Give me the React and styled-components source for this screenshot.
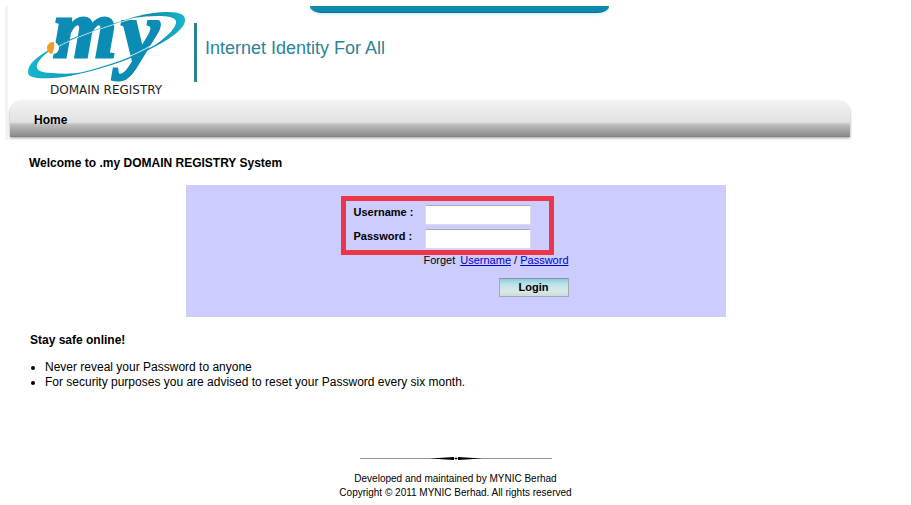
import styled, { createGlobalStyle } from "styled-components"

const GlobalStyle = createGlobalStyle`
    * {
        box-sizing: border-box;
    }

    body {
        margin: 0;
        background-color: #ffffff;
        color: #000000;
        font-family: "Liberation Sans", Arial, sans-serif;
        font-size: 12px;
    }
`

const Page = styled.div`
    border-right: 1px solid #cccccc;
    min-height: 100vh;
    padding-top: 6px;
`

const Header = styled.header`
    border-left: 3px solid #f3f3f3;
    margin-left: 5px;
    padding-bottom: 3px;
`

const TopTab = styled.div`
    background-color: #0e88ab;
    border-bottom: 1px solid #0b6f90;
    border-radius: 0 0 12px 12px / 0 0 7px 7px;
    box-shadow: 0 2px 3px #d5f0f8;
    height: 7px;
    margin: 0 auto;
    max-width: 299px;
`

const Brand = styled.div`
    display: flex;
    padding-left: 16px;
`

const Logo = styled.svg`
    display: block;
    height: 88px;
    overflow: visible;
    width: 170px;
`

const Tagline = styled.p`
    align-items: center;
    align-self: flex-start;
    border-left: 3px solid #2b8396;
    color: #2b8396;
    display: flex;
    font-size: 18px;
    height: 59px;
    line-height: 20px;
    margin: 10px 0 0;
    padding: 0 0 10px 8px;
`

const Nav = styled.nav`
    background: linear-gradient(#f2f2f2, #e2e2e2 58%, #bcbcbc 66%, #8c8c8c 97%, #7c7c7c);
    border-radius: 12px 12px 0 0;
    box-shadow: 0 1px 3px #999999;
    margin: 0 61px 0 2px;
    padding: 12px 24px 9px;
`

const NavLink = styled.a`
    color: #000000;
    display: inline-block;
    font-weight: bold;
    line-height: 15px;
    text-decoration: none;
`

const Main = styled.main`
    padding-top: 16px;
`

const Title = styled.h1`
    font-size: 12px;
    line-height: 15px;
    margin: 0 0 14px 29px;
`

const LoginPanel = styled.section`
    background-color: #ccccff;
    margin: 0 auto 16px;
    max-width: 540px;
    padding: 11px 2px 20px 0;
`

const LoginForm = styled.form`
    display: flex;
    flex-direction: column;
    font-size: 11px;
    margin: 0 auto;
    width: 228px;
`

const Fields = styled.fieldset`
    align-self: flex-start;
    border: 5px solid #ea3648;
    display: grid;
    gap: 4px 8px;
    grid-template-columns: 63px 106px;
    margin: 0;
    padding: 4px 18px 1px 8px;
`

const Label = styled.label`
    font-weight: bold;
    line-height: 14px;
    white-space: nowrap;
`

const Input = styled.input`
    background-color: #ffffff;
    border: 1px solid #dcdce8;
    border-top-color: #a9a9b8;
    border-radius: 2px;
    font-family: inherit;
    font-size: 11px;
    height: 20px;
    padding: 0 3px;
    width: 100%;
`

const Forget = styled.p`
    align-self: flex-end;
    line-height: 11px;
    margin: 0 0 12px;
    white-space: nowrap;

    a {
        color: #0000cc;
    }

    a:first-of-type {
        margin-left: 2px;
    }
`

const LoginButton = styled.button`
    align-self: flex-end;
    background: linear-gradient(#8fcbd8, #b9e3ea 30%, #d9e9e6 70%, #c9dde0);
    border: 1px solid #a6a6b4;
    border-top-color: #7d9aa6;
    color: #000000;
    cursor: pointer;
    font-family: inherit;
    font-size: 11px;
    font-weight: bold;
    height: 19px;
    line-height: 15px;
    padding: 0;
    width: 70px;
`

const Subtitle = styled.h2`
    font-size: 12px;
    line-height: 15px;
    margin: 0 0 12px 30px;
`

const Tips = styled.ul`
    line-height: 15px;
    margin: 0;
    padding-left: 45px;
`

const Footer = styled.footer`
    font-size: 10px;
    line-height: 14px;
    padding-top: 64px;
    text-align: center;

    p {
        margin: 0;
    }
`

const Ornament = styled.svg`
    display: block;
    height: 9px;
    margin: 0 auto 9px;
    width: 192px;
`

function RegistryLogo() {
    return (
        <Logo viewBox="24 13 170 88" role="img" aria-label=".my Domain Registry">
            <defs>
                <linearGradient id="ring" x1="0" x2="1">
                    <stop offset="0" stopColor="#16b6cc" />
                    <stop offset="0.4" stopColor="#138fb2" />
                    <stop offset="0.8" stopColor="#138fb2" />
                    <stop offset="1" stopColor="#16b6cc" />
                </linearGradient>
            </defs>
            <g
                fill="#0b8cb4"
                stroke="#0b8cb4"
                strokeWidth="3"
                fontFamily="Liberation Serif, serif"
                fontStyle="italic"
                fontWeight="bold"
            >
                <text x="53" y="57" fontSize="82">
                    m
                </text>
                <text x="121" y="61" fontSize="86">
                    y
                </text>
            </g>
            <path d="M54 49C76 36 105 27 134 18" fill="none" stroke="#e4f6fa" strokeWidth="1" />
            <path d="M83 71C110 65 132 57 154 44" fill="none" stroke="#e4f6fa" strokeWidth="1" />
            <path
                fill="url(#ring)"
                fillRule="evenodd"
                d="M28 72C28 63 39 56 50 49C76 35 106 26 134 17C148 13 160 12 168 12C180 12 186 15 185 21C184 29 170 39 156 46C132 59 108 67 83 73C64 78 46 79 37 78C30 77 28 75 28 72ZM37 65C35 70 42 73 52 73C62 74 74 74 83 72C107 66 131 58 155 45C168 36 177 27 176 21C173 14 150 16 133 18C106 26 76 36 51 50C43 55 39 60 37 65Z"
            />
            <circle cx="53" cy="48" r="6" fill="#ffffff" />
            <path d="M54 42A6 6 0 0 0 52 54Q55 48 54 42Z" fill="#f39a2b" />
            <text x="50" y="94" fill="#222222" fontFamily="DejaVu Sans, sans-serif" fontSize="12">
                DOMAIN REGISTRY
            </text>
        </Logo>
    )
}

function Divider() {
    return (
        <Ornament viewBox="0 0 192 9" aria-hidden="true">
            <path d="M0 4.5H192" stroke="#999999" />
            <path d="M70 4.5L94 3V6Z M122 4.5L98 3V6Z" fill="#000000" />
            <circle cx="96" cy="4.5" r="1" fill="#000000" />
        </Ornament>
    )
}

function Login() {
    return (
        <LoginForm onSubmit={(e) => e.preventDefault()}>
            <Fields>
                <Label htmlFor="username">Username :</Label>
                <Input id="username" type="text" />
                <Label htmlFor="password">Password :</Label>
                <Input id="password" type="password" />
            </Fields>
            <Forget>
                Forget <a href="#username">Username</a> / <a href="#password">Password</a>
            </Forget>
            <LoginButton type="submit">Login</LoginButton>
        </LoginForm>
    )
}

function App() {
    return (
        <Page>
            <GlobalStyle />
            <Header>
                <TopTab />
                <Brand>
                    <RegistryLogo />
                    <Tagline>Internet Identity For All</Tagline>
                </Brand>
                <Nav>
                    <NavLink href="#home">Home</NavLink>
                </Nav>
            </Header>
            <Main>
                <Title>Welcome to .my DOMAIN REGISTRY System</Title>
                <LoginPanel>
                    <Login />
                </LoginPanel>
                <Subtitle>Stay safe online!</Subtitle>
                <Tips>
                    <li>Never reveal your Password to anyone</li>
                    <li>For security purposes you are advised to reset your Password every six month.</li>
                </Tips>
            </Main>
            <Footer>
                <Divider />
                <p>Developed and maintained by MYNIC Berhad</p>
                <p>Copyright © 2011 MYNIC Berhad. All rights reserved</p>
            </Footer>
        </Page>
    )
}

export default App
